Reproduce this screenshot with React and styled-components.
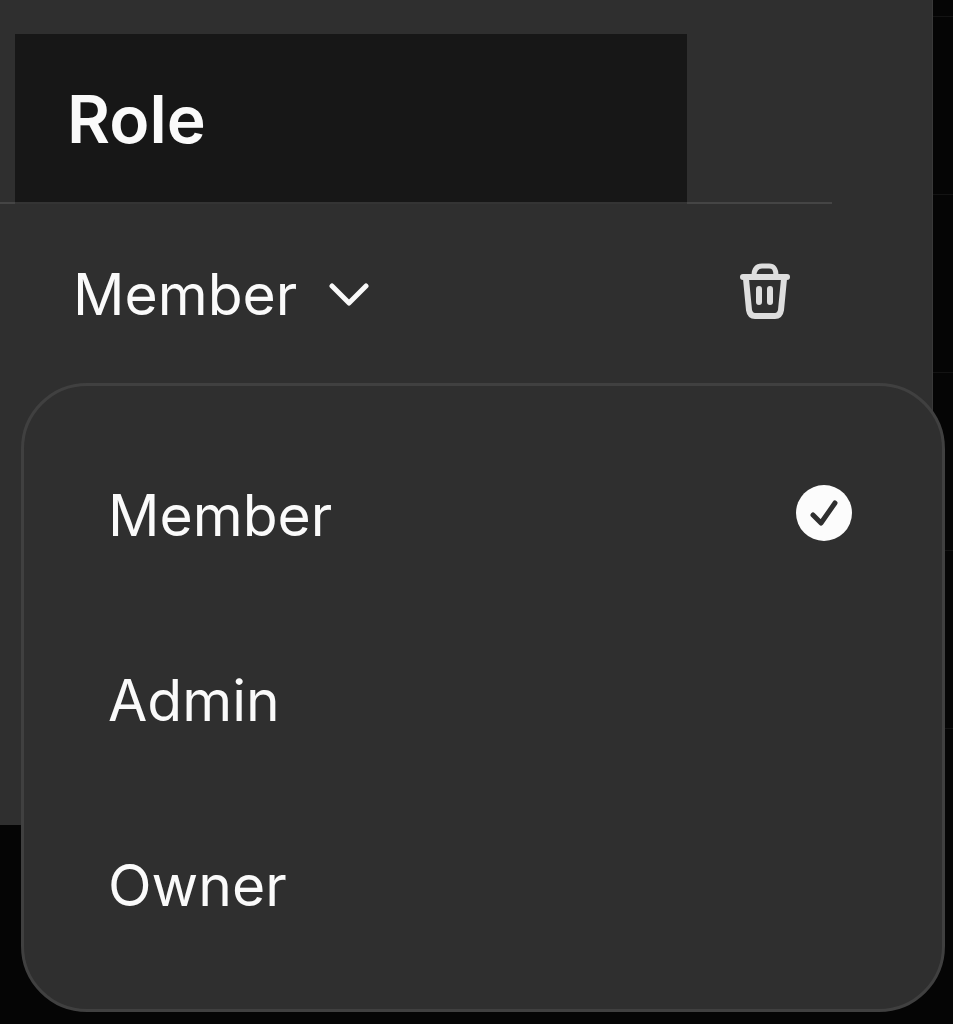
import { useState } from "react";
import styled, { createGlobalStyle } from "styled-components";

const roles = ["Member", "Admin", "Owner"];

const TrashIcon = () => (
  <svg width="52" height="60" viewBox="0 0 52 60" fill="none" aria-hidden="true">
    <g
      stroke="#dedede"
      strokeWidth="6"
      strokeLinecap="round"
      strokeLinejoin="round"
    >
      <path d="M4 16H48" />
      <path d="M15 15C15 8 18 5 23 5H30C35 5 37 8 37 15" strokeWidth="5" />
      <path d="M7 18L10 49Q11 55 16 55H36Q41 55 42 49L45 18" />
      <path d="M20 28V41M31 28V41" />
    </g>
  </svg>
);

const ChevronIcon = () => (
  <svg width="40" height="24" viewBox="0 0 40 24" fill="none" aria-hidden="true">
    <path
      d="M3 3L20 20L37 3"
      stroke="#fafafa"
      strokeWidth="5"
      strokeLinecap="round"
      strokeLinejoin="round"
    />
  </svg>
);

const CheckIcon = () => (
  <CheckSvg viewBox="0 0 58 58" fill="none" aria-hidden="true">
    <circle cx="29" cy="29" r="28" fill="#fcfcfc" />
    <path
      d="M18 31L26 39L40 19"
      stroke="#2f2f2f"
      strokeWidth="5"
      strokeLinecap="round"
      strokeLinejoin="round"
    />
  </CheckSvg>
);

const App = () => {
  const [role, setRole] = useState("Member");
  const [open, setOpen] = useState(true);

  const pick = (name) => {
    setRole(name);
    setOpen(false);
  };

  return (
    <Page>
      <GlobalStyle />
      <Panel>
        <Table>
          <thead>
            <tr>
              <HeadGap />
              <HeadCell scope="col">Role</HeadCell>
              <HeadAction />
            </tr>
          </thead>
          <tbody>
            <tr>
              <td />
              <RoleCell>
                <RoleButton
                  type="button"
                  aria-haspopup="listbox"
                  aria-expanded={open}
                  onClick={() => setOpen(!open)}
                >
                  {role}
                  <ChevronIcon />
                </RoleButton>
              </RoleCell>
              <ActionCell>
                <IconButton type="button" aria-label="Remove member">
                  <TrashIcon />
                </IconButton>
              </ActionCell>
            </tr>
          </tbody>
        </Table>
      </Panel>
      <Backdrop>
        <BackdropRow />
        <BackdropRow />
        <BackdropRow />
        <BackdropRow />
        <BackdropRow />
      </Backdrop>
      {open && (
        <Menu role="listbox" aria-label="Role">
          {roles.map((name) => (
            <MenuItem
              key={name}
              type="button"
              role="option"
              aria-selected={name === role}
              onClick={() => pick(name)}
            >
              {name}
              {name === role && <CheckIcon />}
            </MenuItem>
          ))}
        </Menu>
      )}
    </Page>
  );
};

export default App;

const GlobalStyle = createGlobalStyle`
  * {
    box-sizing: border-box;
  }

  body {
    margin: 0;
    background-color: #050505;
    color: #fafafa;
    font-family: Inter, "Liberation Sans", sans-serif;
  }

  button {
    border: 0;
    background: none;
    color: inherit;
    font: inherit;
    cursor: pointer;
  }
`;

const Page = styled.main`
  position: relative;
  display: flex;
  align-items: flex-start;
  min-height: 100vh;
`;

const Panel = styled.section`
  flex: 1;
  min-height: 825px;
  padding: 34px 100px 0 0;
  border-right: 1px solid #393939;
  background-color: #2f2f2f;
`;

const Table = styled.table`
  width: 100%;
  table-layout: fixed;
  border-collapse: separate;
  border-spacing: 0;
`;

const HeadGap = styled.td`
  width: 15px;
  padding: 0;
  border-bottom: 2px solid #454545;
`;

const HeadCell = styled.th`
  height: 170px;
  padding: 2px 52px 0;
  border-bottom: 2px solid #343434;
  background-color: #171717;
  background-clip: padding-box;
  font-size: 66px;
  font-weight: 600;
  line-height: 80px;
  text-align: left;
`;

const HeadAction = styled.td`
  width: 145px;
  padding: 0;
  border-bottom: 2px solid #454545;
`;

const RoleCell = styled.td`
  height: 180px;
  padding: 2px 58px 0;
`;

const RoleButton = styled.button`
  display: flex;
  align-items: center;
  gap: 32px;
  padding: 0;
  font-size: 57px;
  line-height: 72px;
`;

const ActionCell = styled.td`
  padding: 0 41px 6px 0;
`;

const IconButton = styled.button`
  display: flex;
  margin-left: auto;
  padding: 0;
`;

const Backdrop = styled.div`
  width: 20px;
  padding-top: 16px;
`;

const BackdropRow = styled.div`
  height: 178px;
  border-top: 1px solid #131313;
`;

const Menu = styled.div`
  position: absolute;
  top: 383px;
  left: 21px;
  right: 8px;
  display: flex;
  flex-direction: column;
  padding: 37px 89px 31px 84px;
  border: 3px solid #404040;
  border-radius: 66px;
  background-color: #2f2f2f;
`;

const MenuItem = styled.button`
  display: flex;
  align-items: center;
  justify-content: space-between;
  height: 185px;
  padding: 0;
  font-size: 57px;
  line-height: 72px;
  text-align: left;
`;

const CheckSvg = styled.svg`
  width: 58px;
  height: 58px;
  margin-bottom: 6px;
`;
